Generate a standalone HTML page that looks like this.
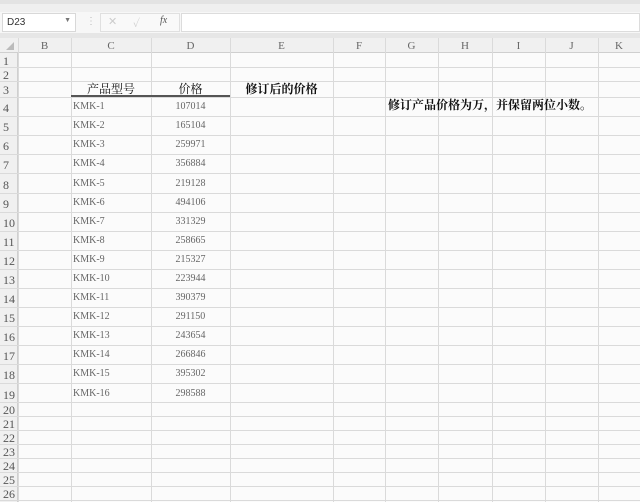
<!DOCTYPE html>
<html><head><meta charset="utf-8"><style>
*{margin:0;padding:0;box-sizing:border-box}
body{width:640px;height:502px;overflow:hidden;background:#fbfbfb;position:relative;font-family:"Liberation Serif","Noto Serif CJK SC",serif}
.a{position:absolute}
.v{position:absolute;top:38px;width:1px;height:464px;background:#dadada}
.h{position:absolute;left:0;width:640px;height:1px;background:#dadada}
.rn{position:absolute;left:0;width:18px;text-align:left;padding-left:3px;font-size:12px;color:#555;line-height:1}
.ch{position:absolute;top:40px;font-size:11px;color:#666;text-align:center}
.p{position:absolute;left:73px;font-size:10px;color:#666;line-height:1}
.d{position:absolute;left:151px;width:79px;text-align:center;font-size:10px;color:#666;line-height:1}
</style></head><body>
<div class="a" style="left:0;top:0;width:640px;height:4px;background:#e3e3e3"></div>
<div class="a" style="left:0;top:4px;width:640px;height:8px;background:#efefef"></div>
<div class="a" style="left:0;top:12px;width:640px;height:21px;background:#f7f7f7"></div>
<div class="a" style="left:2px;top:13px;width:74px;height:19px;background:#fff;border:1px solid #d8d8d8;font-family:'Liberation Sans',sans-serif;font-size:10px;color:#333;padding:3px 0 0 4px">D23<span style="position:absolute;right:4px;top:3px;font-size:7px;color:#777">▼</span></div>
<div class="a" style="left:86px;top:16px;color:#bbb;font-size:10px">⋮</div>
<div class="a" style="left:100px;top:13px;width:80px;height:19px;background:#f9f9f9;border:1px solid #e0e0e0"></div>
<div class="a" style="left:108px;top:15px;color:#ccc;font-size:11px;font-family:'Liberation Sans',sans-serif">✕</div>
<div class="a" style="left:133px;top:15px;color:#ccc;font-size:11px">✓</div>
<div class="a" style="left:160px;top:15px;color:#555;font-size:10px;font-style:italic">fx</div>
<div class="a" style="left:181px;top:13px;width:459px;height:19px;background:#fff;border:1px solid #dcdcdc"></div>
<div class="a" style="left:0;top:33px;width:640px;height:5px;background:#e6e6e6"></div>
<div class="a" style="left:0;top:38px;width:640px;height:15px;background:#f0f0f0;border-bottom:1px solid #cfcfcf"></div>
<div class="a" style="left:0;top:53px;width:18px;height:449px;background:#f0f0f0;border-right:1px solid #cfcfcf"></div>
<div class="a" style="left:6px;top:42px;width:0;height:0;border-left:8px solid transparent;border-bottom:8px solid #bbb"></div>
<div class="v" style="left:18px"></div><div class="v" style="left:71px"></div><div class="v" style="left:151px"></div><div class="v" style="left:230px"></div><div class="v" style="left:333px"></div><div class="v" style="left:385px"></div><div class="v" style="left:438px"></div><div class="v" style="left:492px"></div><div class="v" style="left:545px"></div><div class="v" style="left:598px"></div>
<div class="h" style="top:67px"></div><div class="h" style="top:81px"></div><div class="h" style="top:97px"></div><div class="h" style="top:116px"></div><div class="h" style="top:135px"></div><div class="h" style="top:154px"></div><div class="h" style="top:173px"></div><div class="h" style="top:193px"></div><div class="h" style="top:212px"></div><div class="h" style="top:231px"></div><div class="h" style="top:250px"></div><div class="h" style="top:269px"></div><div class="h" style="top:288px"></div><div class="h" style="top:307px"></div><div class="h" style="top:326px"></div><div class="h" style="top:345px"></div><div class="h" style="top:364px"></div><div class="h" style="top:383px"></div><div class="h" style="top:402px"></div><div class="h" style="top:416px"></div><div class="h" style="top:430px"></div><div class="h" style="top:444px"></div><div class="h" style="top:458px"></div><div class="h" style="top:472px"></div><div class="h" style="top:486px"></div><div class="h" style="top:500px"></div>
<div class="ch" style="left:18px;width:53px">B</div><div class="ch" style="left:71px;width:80px">C</div><div class="ch" style="left:151px;width:79px">D</div><div class="ch" style="left:230px;width:103px">E</div><div class="ch" style="left:333px;width:52px">F</div><div class="ch" style="left:385px;width:53px">G</div><div class="ch" style="left:438px;width:54px">H</div><div class="ch" style="left:492px;width:53px">I</div><div class="ch" style="left:545px;width:53px">J</div><div class="ch" style="left:598px;width:42px">K</div>
<div class="rn" style="top:55px">1</div><div class="rn" style="top:69px">2</div><div class="rn" style="top:84px">3</div><div class="rn" style="top:102px">4</div><div class="rn" style="top:121px">5</div><div class="rn" style="top:140px">6</div><div class="rn" style="top:159px">7</div><div class="rn" style="top:179px">8</div><div class="rn" style="top:198px">9</div><div class="rn" style="top:217px">10</div><div class="rn" style="top:236px">11</div><div class="rn" style="top:255px">12</div><div class="rn" style="top:274px">13</div><div class="rn" style="top:293px">14</div><div class="rn" style="top:312px">15</div><div class="rn" style="top:331px">16</div><div class="rn" style="top:350px">17</div><div class="rn" style="top:369px">18</div><div class="rn" style="top:389px">19</div><div class="rn" style="top:404px">20</div><div class="rn" style="top:418px">21</div><div class="rn" style="top:432px">22</div><div class="rn" style="top:446px">23</div><div class="rn" style="top:460px">24</div><div class="rn" style="top:474px">25</div><div class="rn" style="top:488px">26</div>
<div class="a" style="left:71px;top:82px;width:80px;text-align:center;font-size:12px;color:#111;line-height:14px">产品型号</div>
<div class="a" style="left:151px;top:82px;width:79px;text-align:center;font-size:12px;color:#111;line-height:14px">价格</div>
<div class="a" style="left:230px;top:82px;width:103px;text-align:center;font-size:12px;color:#111;font-weight:bold;line-height:14px">修订后的价格</div>
<div class="a" style="left:71px;top:95px;width:159px;height:2px;background:#555"></div>
<div class="a" style="left:388px;top:98px;font-size:12px;color:#111;font-weight:bold;line-height:14px">修订产品价格为万，并保留两位小数。</div>
<div class="p" style="top:102px">KMK-1</div><div class="d" style="top:102px">107014</div>
<div class="p" style="top:121px">KMK-2</div><div class="d" style="top:121px">165104</div>
<div class="p" style="top:140px">KMK-3</div><div class="d" style="top:140px">259971</div>
<div class="p" style="top:159px">KMK-4</div><div class="d" style="top:159px">356884</div>
<div class="p" style="top:179px">KMK-5</div><div class="d" style="top:179px">219128</div>
<div class="p" style="top:198px">KMK-6</div><div class="d" style="top:198px">494106</div>
<div class="p" style="top:217px">KMK-7</div><div class="d" style="top:217px">331329</div>
<div class="p" style="top:236px">KMK-8</div><div class="d" style="top:236px">258665</div>
<div class="p" style="top:255px">KMK-9</div><div class="d" style="top:255px">215327</div>
<div class="p" style="top:274px">KMK-10</div><div class="d" style="top:274px">223944</div>
<div class="p" style="top:293px">KMK-11</div><div class="d" style="top:293px">390379</div>
<div class="p" style="top:312px">KMK-12</div><div class="d" style="top:312px">291150</div>
<div class="p" style="top:331px">KMK-13</div><div class="d" style="top:331px">243654</div>
<div class="p" style="top:350px">KMK-14</div><div class="d" style="top:350px">266846</div>
<div class="p" style="top:369px">KMK-15</div><div class="d" style="top:369px">395302</div>
<div class="p" style="top:389px">KMK-16</div><div class="d" style="top:389px">298588</div>
</body></html>
